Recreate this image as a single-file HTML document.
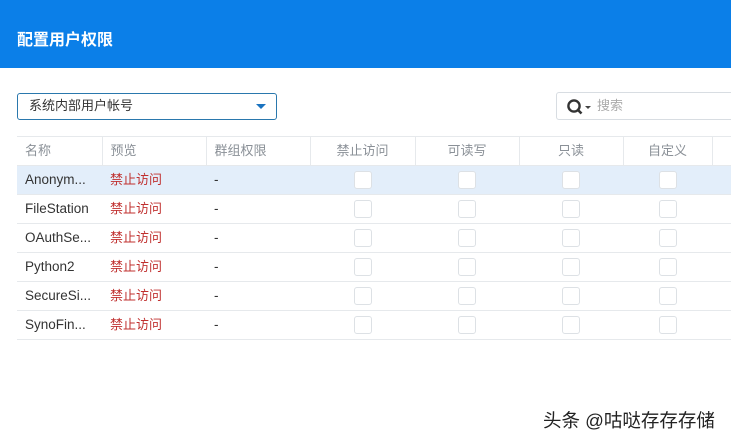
<!DOCTYPE html>
<html><head><meta charset="utf-8"><style>
*{margin:0;padding:0;box-sizing:border-box}
body{width:731px;height:442px;overflow:hidden;background:#fff;font-family:"Liberation Sans","Noto Sans CJK SC",sans-serif;position:relative}
.hd{position:absolute;left:0;top:0;width:731px;height:68px;background:#0b7fe8}
.hd span{position:absolute;left:17px;top:26px;color:#fff;font-size:16px;font-weight:bold}
.dd{position:absolute;left:17px;top:93px;width:260px;height:27px;border:1px solid #2a78ad;border-radius:3px;font-size:13px;color:#333;padding:4px 0 0 11px;line-height:16px}
.dd i{position:absolute;right:10px;top:10px;border-left:5px solid transparent;border-right:5px solid transparent;border-top:5px solid #1a73c0}
.sr{position:absolute;left:556px;top:92px;width:180px;height:28px;border:1px solid #d8dde2;border-radius:3px;font-size:13px;color:#aaa}
.sr span{position:absolute;left:40px;top:5px;line-height:16px}
table{position:absolute;left:17px;top:136px;border-collapse:collapse;font-size:13.5px;line-height:16px}
td,th{height:29px;border-bottom:1px solid #e6e9ec;font-weight:normal;padding:0 8px;text-align:left;color:#333;vertical-align:middle}
th{color:#8a9097;border-top:1px solid #e6e9ec;border-right:1px solid #e6e9ec;text-align:center;font-size:13px}
th.l{text-align:left}
th.x{border-right:none}
tr.sel td{background:#e3eefa}
.r{color:#c0302f;font-size:13px}
.cb{display:block;margin:0 auto;width:18px;height:18px;border:1px solid #dde1e5;border-radius:3px;background:#fff}
.wm{position:absolute;left:543px;top:409px;font-size:18.5px;color:#222;line-height:24px;text-shadow:0 0 2px #fff}
</style></head><body>
<div class="hd"><span>配置用户权限</span></div>
<div class="dd">系统内部用户帐号<i></i></div>
<div class="sr"><svg style="position:absolute;left:9px;top:5px" width="30" height="18" viewBox="0 0 30 18"><circle cx="8" cy="8" r="5.6" fill="none" stroke="#333" stroke-width="2.4"/><line x1="12" y1="12" x2="15.5" y2="15.5" stroke="#333" stroke-width="2.6"/><path d="M19 8h6l-3 3z" fill="#444"/></svg><span>搜索</span></div>
<table>
<tr><th class="l" style="width:85px">名称</th><th class="l" style="width:104px">预览</th><th class="l" style="width:104px">群组权限</th><th style="width:105px">禁止访问</th><th style="width:104px">可读写</th><th style="width:104px">只读</th><th style="width:89px">自定义</th><th class="x" style="width:19px"></th></tr>
<tr class="sel"><td>Anonym...</td><td class="r">禁止访问</td><td>-</td><td><i class="cb"></i></td><td><i class="cb"></i></td><td><i class="cb"></i></td><td><i class="cb"></i></td><td></td></tr>
<tr><td>FileStation</td><td class="r">禁止访问</td><td>-</td><td><i class="cb"></i></td><td><i class="cb"></i></td><td><i class="cb"></i></td><td><i class="cb"></i></td><td></td></tr>
<tr><td>OAuthSe...</td><td class="r">禁止访问</td><td>-</td><td><i class="cb"></i></td><td><i class="cb"></i></td><td><i class="cb"></i></td><td><i class="cb"></i></td><td></td></tr>
<tr><td>Python2</td><td class="r">禁止访问</td><td>-</td><td><i class="cb"></i></td><td><i class="cb"></i></td><td><i class="cb"></i></td><td><i class="cb"></i></td><td></td></tr>
<tr><td>SecureSi...</td><td class="r">禁止访问</td><td>-</td><td><i class="cb"></i></td><td><i class="cb"></i></td><td><i class="cb"></i></td><td><i class="cb"></i></td><td></td></tr>
<tr><td>SynoFin...</td><td class="r">禁止访问</td><td>-</td><td><i class="cb"></i></td><td><i class="cb"></i></td><td><i class="cb"></i></td><td><i class="cb"></i></td><td></td></tr>
</table>
<div class="wm">头条 @咕哒存存存储</div>
</body></html>
